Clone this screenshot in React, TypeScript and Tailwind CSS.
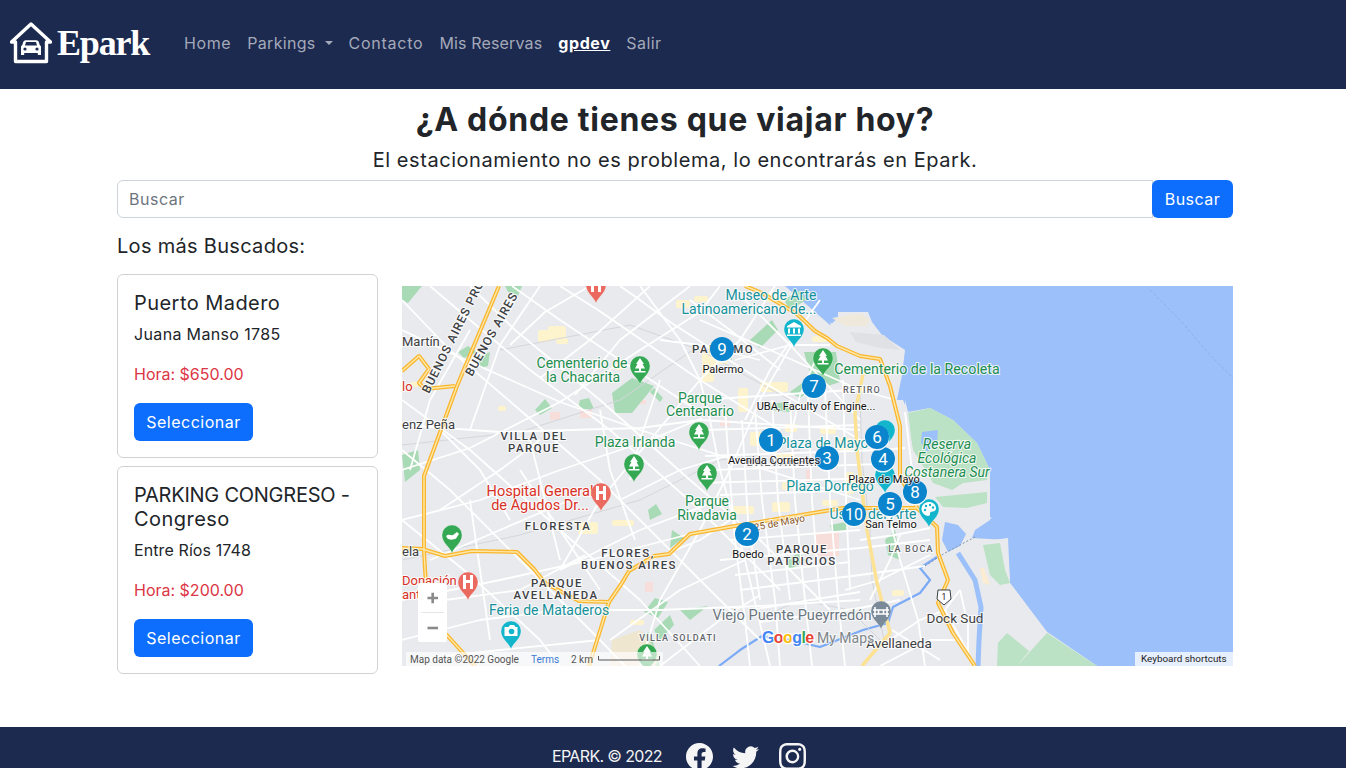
import React from "react";

const NAVY = "bg-[#1c2a50]";

function Logo() {
  return (
    <div className="flex items-center">
      <svg width="42" height="42" viewBox="0 0 42 42" className="shrink-0">
        <path d="M1.5 20 L21 2 L40.5 20 H36.5 V39.5 H5.5 V20 Z" fill="none" stroke="#fff" strokeWidth="3.4" strokeLinejoin="round" />
        <path d="M12.5 22.5 Q13 18.2 16 18.2 H26 Q29 18.2 29.5 22.5 L31 24.5 V33 H27.8 V31 H14.2 V33 H11 V24.5 Z M15 23.6 H27 L26 19.9 H16 Z" fill="#fff" fillRule="evenodd" />
        <circle cx="15" cy="27" r="1.6" fill="#1c2a50" />
        <circle cx="27" cy="27" r="1.6" fill="#1c2a50" />
      </svg>
      <span className="ml-[5px] text-[36px] leading-none font-bold text-white tracking-[-1.2px] font-['Liberation_Serif',serif]">Epark</span>
    </div>
  );
}

function Nav() {
  const link = "text-[#a4a9b9] text-[16px]";
  return (
    <nav className={`h-[89px] ${NAVY} flex items-center pl-[10px] pb-[3px] shrink-0`}>
      <Logo />
      <div className="ml-[35px] flex items-center gap-[16px]">
        <span className={`${link} tracking-[0.6px]`}>Home</span>
        <span className={`${link} tracking-[0.3px] flex items-center`}>
          Parkings
          <span className="ml-[9px] w-0 h-0 border-x-[4.5px] border-x-transparent border-t-[4.5px] border-t-[#a4a9b9]" />
        </span>
        <span className={`${link} tracking-[0.75px]`}>Contacto</span>
        <span className={`${link} tracking-[0.15px]`}>Mis Reservas</span>
        <span className="text-white text-[16px] font-bold underline tracking-[0.6px]">gpdev</span>
        <span className={`${link} tracking-[0.4px]`}>Salir</span>
      </div>
    </nav>
  );
}

function Card({ title, addr, price, addrCls, cls }: { title: React.ReactNode; addr: string; price: string; addrCls: string; cls: string }) {
  return (
    <div className={`border border-[#d0d2d4] rounded-[6px] px-4 pt-[16px] bg-white ${cls}`}>
      <div className="text-[20px] leading-[24px] text-[#212529]">{title}</div>
      <div className={`mt-[7px] text-[16px] leading-[24px] text-[#212529] ${addrCls}`}>{addr}</div>
      <div className="mt-[16px] text-[16px] leading-[24px] text-[#dc3545]">{price}</div>
      <button className="mt-[17px] h-[38px] w-[119px] rounded-[6px] bg-[#0d6efd] text-white text-[16px] tracking-[0.5px]">Seleccionar</button>
    </div>
  );
}

type P = [number, number][];
const pts = (p: P) => p.map((a) => a.join(",")).join(" ");

const highways: P[] = [
  [[499, 286], [457, 386], [424, 476], [424, 551], [426, 586], [445, 633], [475, 666]],
  [[402, 371], [419, 356], [429, 369], [419, 383], [425, 389], [455, 386]],
  [[402, 548], [422, 549], [445, 556], [472, 551], [517, 552], [534, 569], [545, 583], [579, 601], [609, 602], [622, 583], [629, 571], [654, 556], [669, 554], [690, 534], [735, 526], [843, 508], [917, 508], [937, 527], [938, 553], [948, 580], [938, 603], [953, 633], [975, 666]],
  [[609, 602], [589, 666]],
  [[745, 286], [762, 293], [797, 314], [815, 331], [827, 338], [837, 346], [860, 356], [880, 359], [890, 386], [900, 426], [900, 476], [917, 508]],
];
const lightRoads: P[] = [
  [[863, 374], [855, 413], [857, 450], [867, 530], [877, 583], [885, 613], [890, 633], [862, 666]],
];

const streets: P[] = [
  [[402, 330], [470, 362], [560, 402], [640, 430], [760, 468], [860, 500]],
  [[402, 425], [500, 432], [640, 428], [700, 420], [860, 430]],
  [[402, 470], [470, 448], [560, 402], [640, 350], [700, 312], [720, 286]],
  [[402, 520], [480, 500], [560, 470], [650, 440], [702, 418]],
  [[402, 600], [500, 580], [590, 560], [690, 534]],
  [[512, 286], [560, 320], [620, 360], [700, 412]],
  [[560, 286], [598, 310], [700, 380], [780, 430]],
  [[620, 286], [640, 300], [670, 322], [760, 380], [860, 440]],
  [[430, 286], [470, 320], [530, 370], [610, 430], [700, 510], [780, 590]],
  [[402, 300], [450, 350], [520, 410], [600, 480], [680, 560], [760, 640]],
  [[402, 400], [470, 450], [560, 530], [640, 600], [700, 666]],
  [[402, 450], [450, 490], [520, 560], [600, 640], [625, 666]],
  [[402, 520], [470, 575], [540, 640], [560, 666]],
  [[470, 286], [515, 330], [600, 400], [690, 480], [760, 540], [830, 610]],
  [[640, 286], [680, 340], [700, 380], [710, 420], [720, 470], [745, 560], [770, 666]],
  [[775, 286], [740, 340], [700, 380], [650, 440], [600, 500], [560, 570]],
  [[800, 330], [760, 400], [730, 470], [700, 530], [660, 600], [640, 666]],
  [[402, 640], [480, 620], [560, 610], [660, 610], [760, 606], [860, 600]],
  [[560, 570], [640, 530], [720, 500]],
  [[520, 470], [560, 530], [600, 590]],
  [[440, 430], [480, 470], [510, 520]],
  [[470, 500], [480, 570], [490, 640]],
  [[530, 440], [545, 500], [560, 560]],
  [[600, 410], [610, 470], [635, 540]],
  [[725, 410], [730, 480], [735, 540], [745, 620], [750, 666]],
  [[755, 410], [762, 500], [775, 600], [780, 666]],
  [[790, 400], [795, 500], [805, 600], [812, 666]],
  [[825, 390], [830, 500], [838, 600], [845, 666]],
  [[880, 440], [885, 500], [900, 560], [918, 620], [925, 666]],
  [[705, 456], [880, 450], [905, 448]],
  [[700, 483], [880, 478], [900, 478]],
  [[720, 560], [860, 548], [930, 540]],
  [[740, 590], [860, 575], [925, 566]],
  [[760, 622], [860, 608], [900, 600]],
  [[700, 400], [790, 394], [880, 388]],
  [[735, 360], [790, 345], [830, 345]],
  [[700, 320], [770, 350], [860, 390], [895, 400]],
  [[745, 300], [790, 345], [860, 420]],
  [[820, 350], [800, 395], [790, 440]],
  [[960, 590], [945, 610], [968, 652]],
  [[960, 590], [968, 625], [968, 655]],
  [[875, 650], [920, 620], [945, 610]],
  [[880, 666], [930, 640], [960, 640]],
  [[412, 660], [500, 650], [600, 640]],
  [[845, 590], [880, 580], [930, 555]],
  [[470, 330], [430, 400], [410, 470]],
  [[540, 286], [500, 345], [470, 430]],
  [[660, 380], [640, 440], [630, 480]],
  [[510, 345], [545, 312], [590, 286]],
  [[540, 378], [590, 340], [650, 286]],
  [[575, 395], [620, 340], [690, 286]],
  [[440, 510], [500, 470], [540, 440]],
  [[430, 560], [500, 530], [570, 500]],
  [[445, 600], [520, 590], [585, 555]],
  [[620, 500], [680, 470], [730, 455]],
  [[650, 560], [700, 540], [730, 520]],
  [[610, 640], [680, 590], [745, 560]],
  [[660, 666], [720, 620], [760, 595]],
  [[742, 420], [748, 520], [760, 600]],
  [[772, 400], [778, 500], [790, 600]],
  [[808, 395], [812, 500], [820, 600]],
  [[843, 380], [846, 500], [850, 590]],
  [[705, 430], [860, 425]],
  [[712, 470], [880, 464]],
  [[720, 495], [860, 490]],
  [[730, 540], [860, 530]],
  [[735, 575], [850, 562]],
  [[750, 610], [860, 592]],
  [[820, 300], [770, 370], [745, 420]],
  [[690, 300], [730, 330], [780, 370]],
  [[660, 340], [700, 345], [760, 360]],
  [[860, 540], [895, 535], [930, 528]],
  [[870, 600], [890, 560], [900, 535]],
  [[905, 412], [912, 470]],
  [[892, 630], [940, 660]],
];
const thin: P[] = [
  [[402, 445], [520, 432], [620, 400], [700, 345]],
  [[500, 350], [630, 325], [700, 350], [790, 400]],
  [[402, 560], [520, 535], [640, 500], [720, 460], [800, 450]],
  [[860, 396], [862, 460], [870, 530], [872, 580], [884, 640]],
  [[760, 618], [800, 600], [850, 610], [880, 640]],
];
const yellowSpots: [number, number, number, number][] = [
  [538, 330, 12, 12], [548, 326, 18, 14], [556, 338, 12, 6], [702, 352, 12, 30], [712, 344, 16, 20], [760, 382, 28, 10], [738, 388, 10, 24], [766, 294, 20, 8], [676, 300, 14, 8],
  [750, 432, 20, 14], [785, 424, 12, 8], [775, 454, 20, 8], [820, 426, 16, 8], [838, 438, 14, 12], [782, 482, 10, 8], [732, 506, 22, 8], [772, 502, 18, 10],
  [578, 522, 20, 12], [612, 520, 22, 6], [630, 620, 14, 5], [892, 590, 12, 6], [882, 640, 12, 6], [498, 406, 8, 5],
  [822, 500, 16, 6], [812, 336, 16, 6], [846, 472, 8, 22], [694, 296, 14, 6], [615, 362, 8, 8], [410, 382, 8, 5],
];
const greens: P[] = [
  [[612, 393], [632, 378], [654, 386], [632, 413], [615, 413]],
  [[654, 388], [663, 398], [660, 402], [650, 392]],
  [[535, 410], [545, 399], [552, 408], [540, 415]],
  [[580, 400], [589, 398], [594, 409], [578, 409]],
  [[402, 286], [422, 286], [408, 303], [402, 300]],
  [[505, 286], [522, 286], [518, 296], [508, 292]],
  [[402, 455], [418, 450], [420, 470], [405, 482]],
  [[458, 352], [468, 346], [477, 352], [464, 358]],
  [[478, 357], [490, 352], [488, 366], [480, 368]],
  [[644, 612], [655, 598], [668, 602], [658, 618]],
  [[680, 610], [708, 606], [690, 620]],
  [[654, 630], [670, 615], [674, 625], [660, 640]],
  [[648, 510], [656, 504], [662, 514], [650, 520]],
  [[672, 530], [684, 538], [670, 548]],
  [[768, 404], [788, 402], [790, 412], [770, 410]],
  [[750, 340], [772, 320], [778, 330], [760, 348]],
  [[784, 300], [800, 290], [806, 300], [790, 310]],
  [[714, 350], [730, 345], [732, 360]],
  [[790, 392], [820, 370], [826, 378], [800, 398]],
  [[804, 352], [836, 352], [840, 382], [815, 390]],
  [[830, 525], [846, 522], [848, 530], [832, 532]],
  [[786, 560], [800, 552], [805, 560], [790, 570]],
  [[620, 640], [650, 632], [660, 666], [630, 666]],
  [[885, 540], [895, 530], [900, 560], [888, 555]],
];
const pinks: [number, number, number, number][] = [
  [580, 410, 12, 8], [550, 412, 10, 8], [720, 420, 10, 6], [810, 372, 8, 12], [815, 532, 24, 24], [770, 446, 10, 6], [640, 400, 6, 4], [645, 582, 8, 10], [806, 470, 5, 12],
];

function Lbl({ x, y, t, c = "#1e8e50", s = 14, a = "middle", w = 400, ls = 0, rot, italic = false }: { x: number; y: number; t: string; c?: string; s?: number; a?: "middle" | "start" | "end"; w?: number; ls?: number; rot?: number; italic?: boolean }) {
  return (
    <text
      x={x}
      y={y}
      fill={c}
      fontSize={s}
      textAnchor={a}
      fontWeight={w}
      fontStyle={italic ? "italic" : "normal"}
      letterSpacing={ls}
      transform={rot !== undefined ? `rotate(${rot} ${x} ${y})` : undefined}
      stroke="#ffffff"
      strokeWidth={2.2}
      strokeOpacity={0.75}
      paintOrder="stroke"
    >
      {t}
    </text>
  );
}

function Pin({ x, y, c, kind }: { x: number; y: number; c: string; kind: "tree" | "h" | "museum" | "camera" | "bridge" | "palette" | "bath" | "blank" }) {
  return (
    <g transform={`translate(${x} ${y})`}>
      <path d="M0 0 C-2 -6 -10 -10 -10 -18 A10 10 0 1 1 10 -18 C10 -10 2 -6 0 0 Z" fill={c} stroke="#fff" strokeWidth="0.5" strokeOpacity="0.5" />
      {kind === "tree" && <path d="M0 -26 L4 -20 H2.5 L5 -15.5 H1 V-13 H5.5 V-11.5 H-5.5 V-13 H-1 V-15.5 H-5 L-2.5 -20 H-4 Z" fill="#fff" />}
      {kind === "h" && <path d="M-5 -25 H-2 V-20 H2 V-25 H5 V-11 H2 V-17 H-2 V-11 H-5 Z" fill="#fff" />}
      {kind === "museum" && <path d="M0 -25 L7 -21 V-19.5 H-7 V-21 Z M-6 -18.5 H-4 V-13.5 H-6 Z M-1 -18.5 H1 V-13.5 H-1 Z M4 -18.5 H6 V-13.5 H4 Z M-7 -12.5 H7 V-11 H-7 Z" fill="#fff" />}
      {kind === "camera" && <><path d="M-6.5 -22 H-2.5 L-1 -24 H3 L4.5 -22 H6.5 V-13 H-6.5 Z" fill="#fff" /><circle cx="0.5" cy="-17.5" r="2.8" fill={c} /></>}
      {kind === "bridge" && <path d="M-6 -22 V-12 M6 -22 V-12 M-8 -19 H8 M-8 -15 H8 M-2.5 -19 V-15 M2.5 -19 V-15" stroke="#fff" strokeWidth="1.6" fill="none" />}
      {kind === "palette" && <><path d="M0 -25 A7 7 0 1 0 -1 -11 C1.5 -11 1 -13 1 -14 C1 -16 6.5 -14.5 7 -18 C7.4 -22 4 -25 0 -25 Z" fill="#fff" /><circle cx="-3" cy="-21" r="1.2" fill={c} /><circle cx="1" cy="-22" r="1.2" fill={c} /><circle cx="-4" cy="-17" r="1.2" fill={c} /><circle cx="4" cy="-19.5" r="1.2" fill={c} /></>}
      {kind === "bath" && <path d="M-6 -17 C-3 -20 -1 -17 1 -18 L5 -21 L7 -19 L4 -14.5 C1.5 -13 -3 -13 -4.5 -14.5 Z" fill="#fff" />}
    </g>
  );
}

function Marker({ x, y, n, fs = 17 }: { x: number; y: number; n: string; fs?: number }) {
  return (
    <g>
      <circle cx={x} cy={y + 1.2} r="12.3" fill="#ffffff" opacity="0.9" />
      <circle cx={x} cy={y} r="12" fill="#0a84cc" />
      <text x={x} y={y + 6} textAnchor="middle" fill="#fff" fontSize={fs}>{n}</text>
    </g>
  );
}

function MapSvg() {
  const cap = { c: "#3c4043", s: 11.4, w: 500, ls: 1.5 };
  const small = { c: "#5f6368", s: 9, w: 500, ls: 1.2 };
  return (
    <svg viewBox="402 286 831 380" width="831" height="380" className="block" fontFamily="Roboto, 'Liberation Sans', sans-serif">
      <rect x="402" y="286" width="831" height="380" fill="#e8eaed" />
      {/* water */}
      <polygon fill="#9cc0fa" points="785,286 815,312 830,325 838,318 838,312 868,312 872,322 882,335 905,350 902,375 897,400 903,400 908,412 930,408 953,420 977,443 990,470 990,520 975,530 972,538 1007,540 1010,583 1047,632 1097,666 1233,666 1233,286" />
      {/* lower land by the docks */}
      <polygon fill="#e8eaed" points="936,513 947,510 967,508 992,518 975,528 962,533 955,524 950,530 945,540" />
      <polygon fill="#e8eaed" points="955,548 985,541 1008,538 1010,583 1047,632 1097,666 975,666 950,600" />
      <polygon fill="#9cc0fa" points="945,522 958,525 966,534 960,546 948,552 942,540" />
      <polyline fill="none" stroke="#9cc0fa" strokeWidth="5" strokeLinejoin="round" points="958,553 975,580 981,607 979,640 978,666" />
      <polyline fill="none" stroke="#7baaf7" strokeWidth="2.2" strokeLinejoin="round" points="937,557 920,568 930,580 920,593 893,607 888,623 863,630 820,647 790,640 762,636 740,650 719,666" />
      <polyline fill="none" stroke="#7f93ad" strokeWidth="1" strokeDasharray="2 2" points="925,566 945,553 975,537" />
      <polyline fill="none" stroke="#8db0ea" strokeWidth="1" strokeDasharray="3 2" points="1150,290 1180,320 1210,355 1233,378" />
      {/* port */}
      <polygon fill="#e8eaed" points="830,322 840,330 866,340 880,345 905,352 900,358 860,350 838,342" />
      <polygon fill="#efe9dc" points="832,318 850,315 862,314 870,320 866,326 845,326" />
      <polygon fill="#e0e1e4" points="850,332 884,335 900,350 880,348 856,342" />
      {/* reserve */}
      <polygon fill="#bbe2c4" points="908,413 930,408 953,420 977,443 990,470 987,480 963,483 952,490 933,483 930,477 913,450 908,423" />
      <polygon fill="#9cc0fa" points="922,432 938,430 937,443 927,452 921,443" />
      <polygon fill="#bbe2c4" points="935,497 987,492 987,503 967,508 943,507" />
      <polygon fill="#e8eaed" points="905,400 908,412 915,470 932,490 925,500 905,490" />
      <polygon fill="#bbe2c4" points="983,545 1000,543 1005,570 1010,583 1000,585 990,575" />
      <polygon fill="#bbe2c4" points="1047,633 1017,666 1097,666" />
      <polygon fill="#bbe2c4" points="1007,633 998,643 997,666 1017,666 1029,651" />
      <polygon fill="#fbecd2" points="980,568 984,568 990,585 983,583" />
      {/* area fills */}
      {pinks.map((r, i) => <rect key={i} x={r[0]} y={r[1]} width={r[2]} height={r[3]} fill="#f8dedb" />)}
      {greens.map((g, i) => <polygon key={i} points={pts(g)} fill="#a8dab5" />)}
      {yellowSpots.map((r, i) => <rect key={i} x={r[0]} y={r[1]} width={r[2]} height={r[3]} rx="2" fill="#fdf3cc" />)}
      <polygon points="612,640 640,630 660,655 655,666 610,666" fill="#efe6d0" />
      {/* streets */}
      {thin.map((s, i) => <polyline key={i} points={pts(s)} fill="none" stroke="#d4d6db" strokeWidth="1" />)}
      {streets.map((s, i) => <polyline key={i} points={pts(s)} fill="none" stroke="#ffffff" strokeWidth="1.8" strokeLinejoin="round" />)}
      {lightRoads.map((s, i) => <polyline key={i} points={pts(s)} fill="none" stroke="#fde293" strokeWidth="3.5" strokeLinejoin="round" />)}
      {highways.map((s, i) => <polyline key={i} points={pts(s)} fill="none" stroke="#fbb62c" strokeWidth="4" strokeLinejoin="round" />)}
      {highways.map((s, i) => <polyline key={i} points={pts(s)} fill="none" stroke="#fde7a8" strokeWidth="1.4" strokeLinejoin="round" />)}
      {/* area labels */}
      <Lbl x={402} y={346} a="start" t="Martín" c="#3c4043" s={13} />
      <Lbl x={402} y={429} a="start" t="enz Peña" c="#3c4043" s={13} />
      <Lbl x={402} y={391} a="start" t="lo" c="#d93025" s={13} />
      <Lbl x={402} y={556} a="start" t="ela" c="#3c4043" s={13} />
      <Lbl x={402} y={585} a="start" t="Donación" c="#d93025" s={13} />
      <Lbl x={402} y={599} a="start" t="anti" c="#d93025" s={13} />
      <Lbl x={429} y={394} t="BUENOS AIRES PRO" c="#3c4043" s={12} w={500} ls={1} a="start" rot={-63.6} />
      <Lbl x={472} y={377} t="BUENOS AIRES" c="#3c4043" s={12} w={500} ls={1} a="start" rot={-60.6} />
      <Lbl {...cap} x={534} y={440} t="VILLA DEL" />
      <Lbl {...cap} x={534} y={452} t="PARQUE" />
      <Lbl {...cap} x={558} y={530} t="FLORESTA" />
      <Lbl {...cap} x={628} y={557} t="FLORES," />
      <Lbl {...cap} x={629} y={569} t="BUENOS AIRES" />
      <Lbl {...cap} x={557} y={587} t="PARQUE" />
      <Lbl {...cap} x={556} y={599} t="AVELLANEDA" />
      <Lbl {...small} x={678} y={641} t="VILLA SOLDATI" />
      <Lbl {...cap} x={802} y={553} t="PARQUE" />
      <Lbl {...cap} x={802} y={565} t="PATRICIOS" />
      <Lbl {...cap} x={785} y={466} t="BALVANERA" c="#70757a" />
      <Lbl {...small} x={862} y={393} t="RETIRO" />
      <Lbl {...small} x={911} y={552} t="LA BOCA" />
      <Lbl {...cap} x={723} y={353} t="PALERMO" />
      <Lbl x={955} y={623} t="Dock Sud" c="#3c4043" s={13.5} />
      <Lbl x={899} y={648} t="Avellaneda" c="#3c4043" s={13.5} />
      <Lbl x={780} y={526} t="25 de Mayo" c="#8a5a2b" s={10} rot={-11} />
      <Lbl x={582} y={368} t="Cementerio de" />
      <Lbl x={583} y={382} t="la Chacarita" />
      <Lbl x={700} y={403} t="Parque" />
      <Lbl x={700} y={416} t="Centenario" />
      <Lbl x={635} y={447} t="Plaza Irlanda" />
      <Lbl x={707} y={506} t="Parque" />
      <Lbl x={707} y={520} t="Rivadavia" />
      <Lbl x={917} y={374} t="Cementerio de la Recoleta" s={14.2} />
      <Lbl x={947} y={449} t="Reserva" italic />
      <Lbl x={947} y={463} t="Ecológica" italic />
      <Lbl x={947} y={477} t="Costanera Sur" italic />
      <Lbl x={771} y={300} t="Museo de Arte" c="#14919b" />
      <Lbl x={749} y={314} t="Latinoamericano de..." c="#14919b" />
      <Lbl x={823} y={448} t="Plaza de Mayo" c="#14919b" />
      <Lbl x={830} y={491} t="Plaza Dorrego" c="#14919b" />
      <Lbl x={873} y={519} t="Usina del Arte" c="#14919b" />
      <Lbl x={540} y={496} t="Hospital General" s={14.5} c="#d93025" />
      <Lbl x={540} y={510} t="de Agudos Dr..." s={14.5} c="#d93025" />
      <Lbl x={549} y={615} t="Feria de Mataderos" c="#14919b" />
      <Lbl x={792} y={620} t="Viejo Puente Pueyrredón" s={14.6} c="#6b7680" />
      {/* pins */}
      <Pin x={596} y={303} c="#ea6a60" kind="h" />
      <Pin x={640} y={384} c="#34a853" kind="tree" />
      <Pin x={699} y={450} c="#34a853" kind="tree" />
      <Pin x={634} y={482} c="#34a853" kind="tree" />
      <Pin x={707} y={491} c="#34a853" kind="tree" />
      <Pin x={823} y={376} c="#34a853" kind="tree" />
      <Pin x={794} y={347} c="#12b5cb" kind="museum" />
      <Pin x={601} y={511} c="#ea6a60" kind="h" />
      <Pin x={468} y={600} c="#ea6a60" kind="h" />
      <Pin x={452} y={553} c="#34a853" kind="bath" />
      <Pin x={511} y={649} c="#12b5cb" kind="camera" />
      <Pin x={647} y={672} c="#34a853" kind="tree" />
      <Pin x={881} y={629} c="#7a8a99" kind="bridge" />
      <Pin x={929} y={527} c="#12b5cb" kind="palette" />
      <Pin x={885} y={493} c="#12b5cb" kind="blank" />
      <Pin x={885} y={448} c="#12b5cb" kind="blank" />
      {/* route shield */}
      <path d="M938 590 H950 L951 599 L944 605 L937 599 Z" fill="#fff" stroke="#3c4043" strokeWidth="1" />
      <text x={944} y={600} textAnchor="middle" fontSize="8.5" fill="#222">1</text>
      {/* markers */}
      <Marker x={722} y={349} n="9" />
      <Marker x={814} y={386} n="7" />
      <Marker x={771} y={440} n="1" />
      <Marker x={827} y={458} n="3" />
      <Marker x={883} y={459} n="4" />
      <Marker x={877} y={437} n="6" />
      <Marker x={890} y={504} n="5" />
      <Marker x={915} y={492} n="8" />
      <Marker x={854} y={514} n="10" fs={16} />
      <Marker x={747} y={534} n="2" />
      {/* marker labels */}
      <g fill="#111" fontSize="11" textAnchor="middle" stroke="#fff" strokeWidth="2" strokeOpacity="0.7" paintOrder="stroke">
        <text x={723} y={373}>Palermo</text>
        <text x={816} y={410}>UBA, Faculty of Engine...</text>
        <text x={774} y={464}>Avenida Corrientes</text>
        <text x={884} y={483}>Plaza de Mayo</text>
        <text x={891} y={528}>San Telmo</text>
        <text x={748} y={558}>Boedo</text>
      </g>
      {/* google + my maps */}
      <g fontSize="16" fontWeight="700" fontFamily="'Liberation Sans', sans-serif" stroke="#fff" strokeWidth="2.5" paintOrder="stroke" strokeOpacity="0.9" letterSpacing="-0.6">
        <text x={762} y={643} fill="#4285f4">G<tspan fill="#ea4335">o</tspan><tspan fill="#fbbc05">o</tspan><tspan fill="#4285f4">g</tspan><tspan fill="#34a853">l</tspan><tspan fill="#ea4335">e</tspan></text>
      </g>
      <text x={817} y={643} fontSize="14" fill="#80868b" stroke="#fff" strokeWidth="2" strokeOpacity="0.7" paintOrder="stroke">My Maps</text>
      {/* zoom control */}
      <g>
        <rect x={418} y={583} width={29} height={59} rx="2" fill="#fff" />
        <rect x={421} y={612} width={23} height={1} fill="#e6e6e6" />
        <path d="M427.5 598 H438 M432.7 592.8 V603.2" stroke="#8a8a8a" strokeWidth="2.6" />
        <path d="M427.5 628 H438" stroke="#8a8a8a" strokeWidth="2.6" />
      </g>
      {/* attribution */}
      <rect x={406} y={652} width={257} height={14} fill="#fff" opacity="0.65" />
      <text x={410} y={662.5} fontSize="10" fill="#555">Map data ©2022 Google</text>
      <text x={531} y={662.5} fontSize="10" fill="#3a7bd5">Terms</text>
      <text x={571} y={662.5} fontSize="10" fill="#555">2 km</text>
      <path d="M598.5 656 V660 H659.5 V656" fill="none" stroke="#555" strokeWidth="1" />
      <rect x={1135} y={652} width={98} height={14} fill="#fff" opacity="0.75" />
      <text x={1141} y={662} fontSize="9.9" fill="#222">Keyboard shortcuts</text>
    </svg>
  );
}

function Footer() {
  return (
    <footer className={`${NAVY} h-[60px] mt-[53px] flex items-start shrink-0 pl-[552px]`}>
      <div className="flex items-center h-[58px]">
        <span className="text-[#f5f5f5] text-[16px] tracking-[-0.65px]">EPARK. © 2022</span>
        <svg className="ml-[24px]" width="27" height="27" viewBox="0 0 16 16" fill="#f5f5f5">
          <path d="M16 8.049c0-4.446-3.582-8.05-8-8.05C3.58 0-.002 3.603-.002 8.05c0 4.017 2.926 7.347 6.75 7.951v-5.625h-2.03V8.05H6.75V6.275c0-2.017 1.195-3.131 3.022-3.131.876 0 1.791.157 1.791.157v1.98h-1.009c-.993 0-1.303.621-1.303 1.258v1.51h2.218l-.354 2.326H9.25V16c3.824-.604 6.75-3.934 6.75-7.951z" />
        </svg>
        <svg className="ml-[19px]" width="27" height="27" viewBox="0 0 16 16" fill="#f5f5f5">
          <path d="M5.026 15c6.038 0 9.341-5.003 9.341-9.334 0-.14 0-.282-.006-.422A6.685 6.685 0 0 0 16 3.542a6.658 6.658 0 0 1-1.889.518 3.301 3.301 0 0 0 1.447-1.817 6.533 6.533 0 0 1-2.087.793A3.286 3.286 0 0 0 7.875 6.03a9.325 9.325 0 0 1-6.767-3.429 3.289 3.289 0 0 0 1.018 4.382A3.323 3.323 0 0 1 .64 6.575v.045a3.288 3.288 0 0 0 2.632 3.218 3.203 3.203 0 0 1-.865.115 3.23 3.23 0 0 1-.614-.057 3.283 3.283 0 0 0 3.067 2.277A6.588 6.588 0 0 1 .78 13.58a6.32 6.32 0 0 1-.78-.045A9.344 9.344 0 0 0 5.026 15z" />
        </svg>
        <svg className="ml-[20px]" width="27" height="27" viewBox="0 0 16 16" fill="#f5f5f5">
          <path d="M8 0C5.829 0 5.556.01 4.703.048 3.85.088 3.269.222 2.76.42a3.917 3.917 0 0 0-1.417.923A3.927 3.927 0 0 0 .42 2.76C.222 3.268.087 3.85.048 4.7.01 5.555 0 5.827 0 8.001c0 2.172.01 2.444.048 3.297.04.852.174 1.433.372 1.942.205.526.478.972.923 1.417.444.445.89.719 1.416.923.51.198 1.09.333 1.942.372C5.555 15.99 5.827 16 8 16s2.444-.01 3.298-.048c.851-.04 1.434-.174 1.943-.372a3.916 3.916 0 0 0 1.416-.923c.445-.445.718-.891.923-1.417.197-.509.332-1.09.372-1.942C15.99 10.445 16 10.173 16 8s-.01-2.445-.048-3.299c-.04-.851-.175-1.433-.372-1.941a3.926 3.926 0 0 0-.923-1.417A3.911 3.911 0 0 0 13.24.42c-.51-.198-1.092-.333-1.943-.372C10.443.01 10.172 0 7.998 0h.003zm-.717 1.442h.718c2.136 0 2.389.007 3.232.046.78.035 1.204.166 1.486.275.373.145.64.319.92.599.28.28.453.546.598.92.11.281.24.705.275 1.485.039.843.047 1.096.047 3.231s-.008 2.389-.047 3.232c-.035.78-.166 1.203-.275 1.485a2.47 2.47 0 0 1-.599.919c-.28.28-.546.453-.92.598-.28.11-.704.24-1.485.276-.843.038-1.096.047-3.232.047s-2.39-.009-3.233-.047c-.78-.036-1.203-.166-1.485-.276a2.478 2.478 0 0 1-.92-.598 2.48 2.48 0 0 1-.6-.92c-.109-.281-.24-.705-.275-1.485-.038-.843-.046-1.096-.046-3.233 0-2.136.008-2.388.046-3.231.036-.78.166-1.204.276-1.486.145-.373.319-.64.599-.92.28-.28.546-.453.92-.598.282-.11.705-.24 1.485-.276.738-.034 1.024-.044 2.515-.045v.002zm4.988 1.328a.96.96 0 1 0 0 1.92.96.96 0 0 0 0-1.92zm-4.27 1.122a4.109 4.109 0 1 0 0 8.217 4.109 4.109 0 0 0 0-8.217zm0 1.441a2.667 2.667 0 1 1 0 5.334 2.667 2.667 0 0 1 0-5.334z" />
        </svg>
      </div>
    </footer>
  );
}

export default function App() {
  return (
    <div className="h-screen overflow-hidden flex flex-col bg-white font-['Inter','Liberation_Sans',sans-serif]">
      <Nav />
      <main className="w-[1116px] ml-[117px] shrink-0">
        <h1 className="text-center text-[32px] leading-[38px] font-bold text-[#212529] mt-[12px] tracking-[0.7px]">¿A dónde tienes que viajar hoy?</h1>
        <p className="text-center text-[20px] leading-[24px] text-[#212529] mt-[9px] tracking-[0.55px]">El estacionamiento no es problema, lo encontrarás en Epark.</p>
        <div className="flex mt-[8px] h-[38px]">
          <div className="flex-1 border border-[#ced4da] rounded-l-[6px] flex items-center pl-[11px] text-[16px] text-[#6c757d] tracking-[0.5px] pb-[1px]">Buscar</div>
          <button className="w-[81px] bg-[#0d6efd] rounded-[6px] text-white text-[16px] -ml-[1px] tracking-[0.5px] pb-[1px]">Buscar</button>
        </div>
        <div className="mt-[16px] text-[20px] leading-[24px] text-[#212529] tracking-[0.3px]">Los más Buscados:</div>
        <div className="flex mt-[16px]">
          <div className="w-[261px] shrink-0 flex flex-col gap-[8px]">
            <Card title={<span className="tracking-[0.45px]">Puerto Madero</span>} addr="Juana Manso 1785" addrCls="tracking-[0.35px]" price="Hora: $650.00" cls="h-[184px]" />
            <Card
              title={<><span className="tracking-[-0.25px]">PARKING CONGRESO -</span><br /><span className="tracking-[0.45px]">Congreso</span></>}
              addr="Entre Ríos 1748"
              addrCls="tracking-[0.1px]"
              price="Hora: $200.00"
              cls="h-[208px]"
            />
          </div>
          <div className="ml-[24px] mt-[12px] w-[831px] h-[380px] overflow-hidden">
            <MapSvg />
          </div>
        </div>
      </main>
      <Footer />
    </div>
  );
}
